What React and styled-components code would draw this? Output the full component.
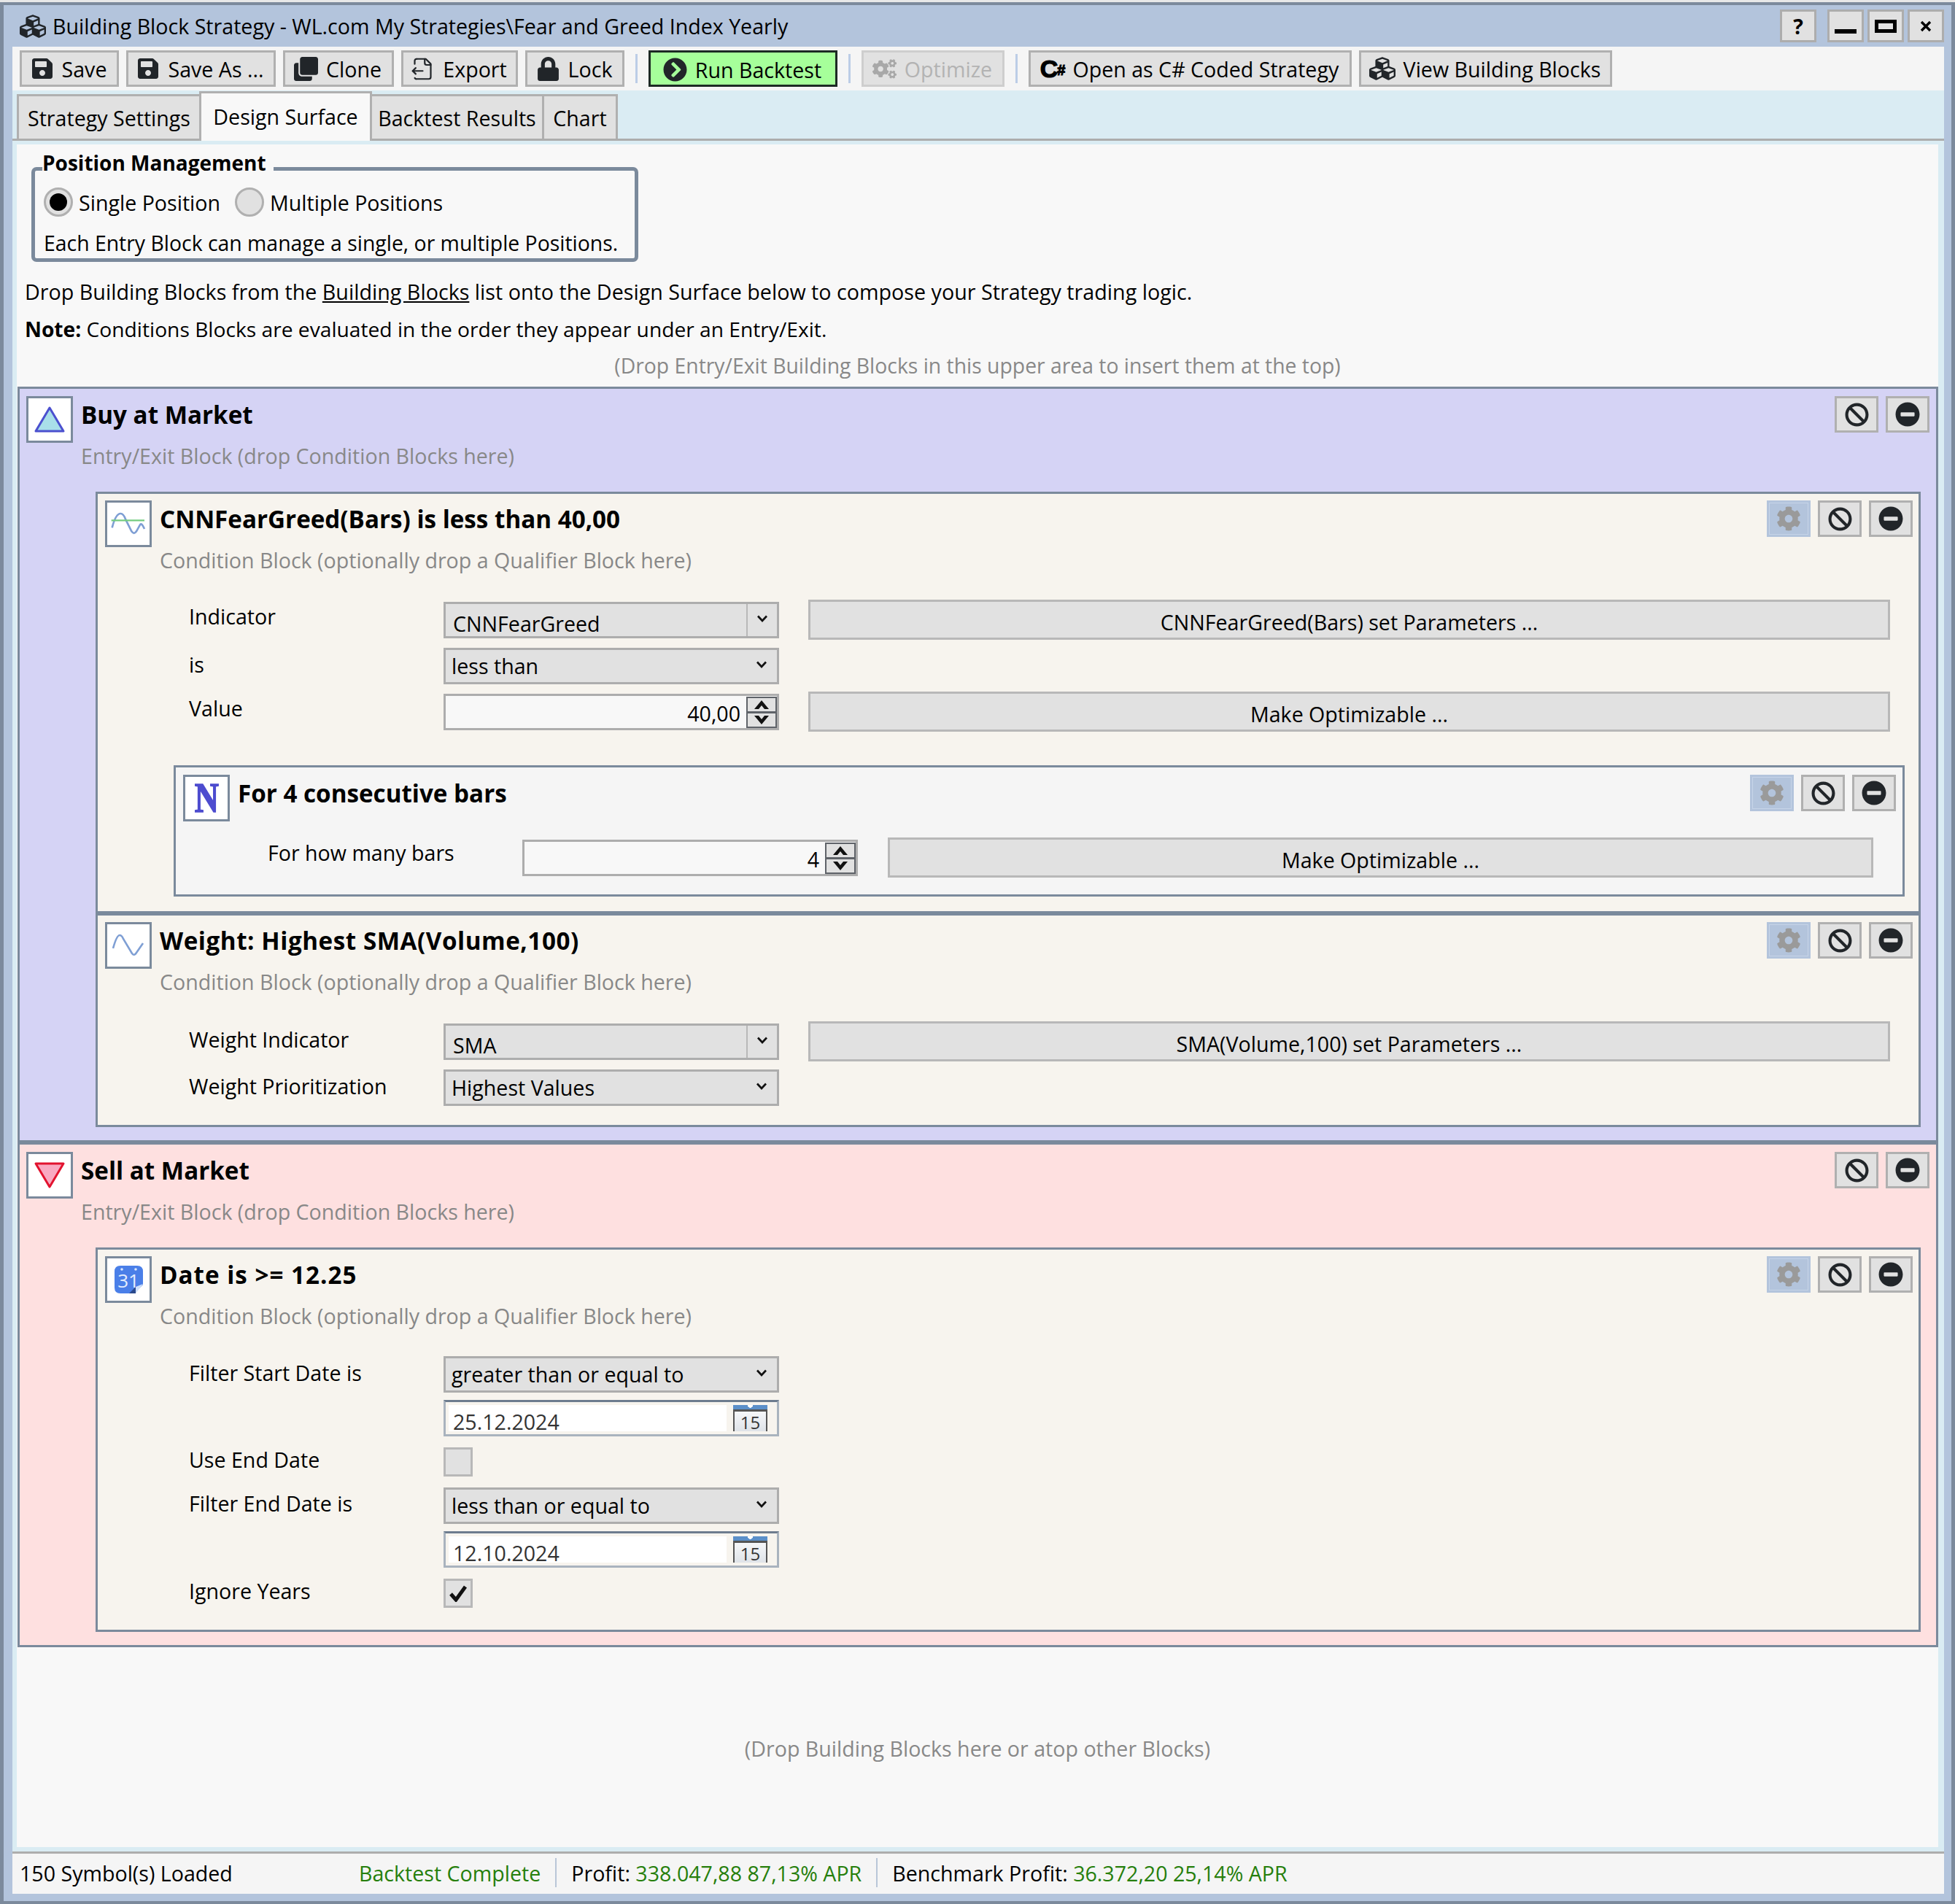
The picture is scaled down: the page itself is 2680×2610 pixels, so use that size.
import styled, { createGlobalStyle } from 'styled-components'
import {
  FaBan,
  FaChevronCircleRight,
  FaClone,
  FaCog,
  FaCogs,
  FaCubes,
  FaLock,
  FaMinusCircle,
  FaSave,
} from 'react-icons/fa'
import { LuFileOutput } from 'react-icons/lu'

const GlobalStyle = createGlobalStyle`
  html, body {
    margin: 0;
    padding: 0;
    background: #e8e8e8;
  }
  * {
    box-sizing: border-box;
  }
`

const TriangleIcon = ({ down }) => (
  <svg width="44" height="38" viewBox="0 0 44 38">
    {down ? (
      <path d="M3 3 H41 L22 35 Z" fill="#f9aac2" stroke="#e2132f" strokeWidth="3" strokeLinejoin="round" />
    ) : (
      <path d="M22 3 L41 35 H3 Z" fill="#a9dfe9" stroke="#4b50cf" strokeWidth="3" strokeLinejoin="round" />
    )}
  </svg>
)

const LevelWaveIcon = () => (
  <svg width="48" height="36" viewBox="40 60 144 108">
    <path
      d="M45 130 Q60 72 80 72 Q92 72 100 95 L125 145 Q135 160 145 145 L160 118 Q166 108 178 135"
      fill="none"
      stroke="#7f9fd4"
      strokeWidth="8"
    />
    <path d="M42 100 H178" stroke="#74cc80" strokeWidth="7" />
  </svg>
)

const WaveIcon = () => (
  <svg width="44" height="32" viewBox="0 0 44 32">
    <path d="M1 20 Q6 2 10 2 Q13 2 15 7 L27 27 Q30 31 33 26 L42 13" fill="none" stroke="#7f9fd4" strokeWidth="2.6" />
  </svg>
)

const CalendarBlockIcon = () => (
  <svg width="39" height="38" viewBox="0 0 39 38">
    <path d="M8 0 H31 Q39 0 39 8 V26 L27 38 H8 Q0 38 0 30 V8 Q0 0 8 0 Z" fill="#4a7fe8" />
    <path d="M20 38 L29 29 V38 Z" fill="#2b4a8c" />
    <path d="M29 29 L39 25 L29 38 Z" fill="#cfe0fb" />
    <circle cx="10" cy="5" r="1.8" fill="#dbe7fc" />
    <circle cx="29" cy="5" r="1.8" fill="#dbe7fc" />
    <text x="19" y="30" textAnchor="middle" fontFamily="Open Sans, sans-serif" fontSize="26" fill="#e4edfd">
      31
    </text>
  </svg>
)

const CalendarPicker = () => (
  <CalendarFace>
    <CalendarHead />
    <CalendarDay>15</CalendarDay>
  </CalendarFace>
)

const Chevron = () => (
  <svg width="16" height="10" viewBox="0 0 16 10">
    <path d="M2 1.5 L8 8 L14 1.5" fill="none" stroke="#111" strokeWidth="2.7" />
  </svg>
)

const Spinner = () => (
  <SpinBox>
    <SpinPart>
      <svg width="22" height="14" viewBox="0 0 22 14">
        <path d="M11 1 L21 13 H15 L11 8 L7 13 H1 Z" fill="#111" />
      </svg>
    </SpinPart>
    <SpinPart>
      <svg width="22" height="14" viewBox="0 0 22 14">
        <path d="M11 13 L21 1 H15 L11 6 L7 1 H1 Z" fill="#111" />
      </svg>
    </SpinPart>
  </SpinBox>
)

const BlockActions = ({ gear }) => (
  <Actions>
    {gear && (
      <ActionButton $gear>
        <FaCog size={34} />
      </ActionButton>
    )}
    <ActionButton>
      <FaBan size={33} />
    </ActionButton>
    <ActionButton>
      <FaMinusCircle size={34} />
    </ActionButton>
  </Actions>
)

const Select = ({ value, editable }) => (
  <SelectBox>
    <SelectText $editable={editable}>{value}</SelectText>
    <SelectArrow $editable={editable}>
      <Chevron />
    </SelectArrow>
  </SelectBox>
)

const NumberInput = ({ value }) => (
  <NumberBox>
    <NumberText>{value}</NumberText>
    <Spinner />
  </NumberBox>
)

const DateInput = ({ value }) => (
  <DateBox>
    <DateText>{value}</DateText>
    <CalendarPicker />
  </DateBox>
)

const toolbarLeft = [
  { label: 'Save', icon: <FaSave size={32} />, width: 136 },
  { label: 'Save As ...', icon: <FaSave size={32} />, width: 205 },
  { label: 'Clone', icon: <FaClone size={33} />, width: 152 },
  { label: 'Export', icon: <LuFileOutput size={33} strokeWidth={1.6} />, width: 160 },
  { label: 'Lock', icon: <FaLock size={33} />, width: 136 },
]

const App = () => {
  return (
    <Window>
      <GlobalStyle />
      <TitleBar>
        <TitleIcon>
          <FaCubes size={36} />
        </TitleIcon>
        <TitleText>Building Block Strategy - WL.com My Strategies\Fear and Greed Index Yearly</TitleText>
        <WindowButtons>
          <WindowButton $help>?</WindowButton>
          <WindowButton $low>
            <svg width="30" height="6" viewBox="0 0 30 6">
              <rect width="30" height="6" fill="#000" />
            </svg>
          </WindowButton>
          <WindowButton>
            <svg width="30" height="18" viewBox="0 0 30 18">
              <rect x="2.5" y="2.5" width="25" height="13" fill="none" stroke="#000" strokeWidth="5" />
            </svg>
          </WindowButton>
          <WindowButton>
            <svg width="16" height="16" viewBox="0 0 16 16">
              <path d="M2 2 L14 14 M14 2 L2 14" stroke="#000" strokeWidth="3.4" />
            </svg>
          </WindowButton>
        </WindowButtons>
      </TitleBar>

      <Toolbar>
        {toolbarLeft.map((item) => (
          <ToolButton key={item.label} $w={item.width}>
            {item.icon}
            <span>{item.label}</span>
          </ToolButton>
        ))}
        <ToolSeparator />
        <RunButton $w={259}>
          <FaChevronCircleRight size={33} />
          <span>Run Backtest</span>
        </RunButton>
        <ToolSeparator />
        <ToolButton $disabled $w={196}>
          <FaCogs size={33} />
          <span>Optimize</span>
        </ToolButton>
        <ToolSeparator />
        <ToolButton $w={443}>
          <CSharpMark>
            C<small>#</small>
          </CSharpMark>
          <span>Open as C# Coded Strategy</span>
        </ToolButton>
        <ToolButton $w={347}>
          <FaCubes size={36} />
          <span>View Building Blocks</span>
        </ToolButton>
      </Toolbar>

      <TabStrip>
        <Tab $w={253}>Strategy Settings</Tab>
        <Tab $active $w={237}>
          Design Surface
        </Tab>
        <Tab $w={239}>Backtest Results</Tab>
        <Tab $w={104}>Chart</Tab>
      </TabStrip>

      <TabPanel>
        <Surface>
          <PositionGroup>
            <legend>Position Management</legend>
            <RadioRow>
              <Radio $checked />
              <RadioLabel>Single Position</RadioLabel>
              <Radio />
              <RadioLabel>Multiple Positions</RadioLabel>
            </RadioRow>
            <GroupNote>Each Entry Block can manage a single, or multiple Positions.</GroupNote>
          </PositionGroup>

          <InfoLine>
            Drop Building Blocks from the <u>Building Blocks</u> list onto the Design Surface below to compose your
            Strategy trading logic.
          </InfoLine>
          <InfoLine $narrow>
            <b>Note:</b> Conditions Blocks are evaluated in the order they appear under an Entry/Exit.
          </InfoLine>
          <DropHint>(Drop Entry/Exit Building Blocks in this upper area to insert them at the top)</DropHint>

          <EntryBlock $bg="#d5d3f5">
            <BlockHead>
              <IconBox>
                <TriangleIcon />
              </IconBox>
              <HeadText>
                <BlockTitle>Buy at Market</BlockTitle>
                <BlockSub>Entry/Exit Block (drop Condition Blocks here)</BlockSub>
              </HeadText>
              <BlockActions />
            </BlockHead>

            <ConditionBlock>
              <ConditionHead>
                <IconBox>
                  <LevelWaveIcon />
                </IconBox>
                <HeadText>
                  <BlockTitle>CNNFearGreed(Bars) is less than 40,00</BlockTitle>
                  <BlockSub>Condition Block (optionally drop a Qualifier Block here)</BlockSub>
                </HeadText>
                <BlockActions gear />
              </ConditionHead>
              <FormRow>
                <FieldLabel $lift={11}>Indicator</FieldLabel>
                <Select value="CNNFearGreed" editable />
                <WideButton>CNNFearGreed(Bars) set Parameters ...</WideButton>
              </FormRow>
              <FormRow>
                <FieldLabel $lift={4}>is</FieldLabel>
                <Select value="less than" />
              </FormRow>
              <FormRow>
                <FieldLabel $lift={11}>Value</FieldLabel>
                <NumberInput value="40,00" />
                <WideButton>Make Optimizable ...</WideButton>
              </FormRow>

              <QualifierBlock>
                <QualifierHead>
                  <IconBox>
                    <QualifierLetter>N</QualifierLetter>
                  </IconBox>
                  <HeadText>
                    <BlockTitle>For 4 consecutive bars</BlockTitle>
                  </HeadText>
                  <BlockActions gear />
                </QualifierHead>
                <FormRow $inner>
                  <FieldLabel $lift={14}>For how many bars</FieldLabel>
                  <NumberInput value="4" />
                  <WideButton>Make Optimizable ...</WideButton>
                </FormRow>
              </QualifierBlock>
            </ConditionBlock>

            <ConditionBlock>
              <ConditionHead>
                <IconBox>
                  <WaveIcon />
                </IconBox>
                <HeadText>
                  <BlockTitle $track={0.55}>Weight: Highest SMA(Volume,100)</BlockTitle>
                  <BlockSub>Condition Block (optionally drop a Qualifier Block here)</BlockSub>
                </HeadText>
                <BlockActions gear />
              </ConditionHead>
              <FormRow>
                <FieldLabel>Weight Indicator</FieldLabel>
                <Select value="SMA" editable />
                <WideButton>SMA(Volume,100) set Parameters ...</WideButton>
              </FormRow>
              <FormRow>
                <FieldLabel $lift={4}>Weight Prioritization</FieldLabel>
                <Select value="Highest Values" />
              </FormRow>
            </ConditionBlock>
          </EntryBlock>

          <EntryBlock $bg="#fee0e0">
            <BlockHead>
              <IconBox>
                <TriangleIcon down />
              </IconBox>
              <HeadText>
                <BlockTitle>Sell at Market</BlockTitle>
                <BlockSub>Entry/Exit Block (drop Condition Blocks here)</BlockSub>
              </HeadText>
              <BlockActions />
            </BlockHead>

            <ConditionBlock>
              <ConditionHead>
                <IconBox>
                  <CalendarBlockIcon />
                </IconBox>
                <HeadText>
                  <BlockTitle $track={1}>Date is &gt;= 12.25</BlockTitle>
                  <BlockSub>Condition Block (optionally drop a Qualifier Block here)</BlockSub>
                </HeadText>
                <BlockActions gear />
              </ConditionHead>
              <FormRow $tight>
                <FieldLabel $lift={5}>Filter Start Date is</FieldLabel>
                <Select value="greater than or equal to" />
              </FormRow>
              <FormRow $tight>
                <FieldLabel />
                <DateInput value="25.12.2024" />
              </FormRow>
              <FormRow $tight>
                <FieldLabel>Use End Date</FieldLabel>
                <CheckBox />
              </FormRow>
              <FormRow $tight>
                <FieldLabel>Filter End Date is</FieldLabel>
                <Select value="less than or equal to" />
              </FormRow>
              <FormRow $tight>
                <FieldLabel />
                <DateInput value="12.10.2024" />
              </FormRow>
              <FormRow $tight>
                <FieldLabel>Ignore Years</FieldLabel>
                <CheckBox>
                  <svg width="26" height="24" viewBox="0 0 26 24">
                    <path d="M3 13 L10 21 L23 3" fill="none" stroke="#111" strokeWidth="5" />
                  </svg>
                </CheckBox>
              </FormRow>
            </ConditionBlock>
          </EntryBlock>

          <BottomDrop>(Drop Building Blocks here or atop other Blocks)</BottomDrop>
        </Surface>
      </TabPanel>

      <StatusBar>
        <StatusCell $w={465}>150 Symbol(s) Loaded</StatusCell>
        <StatusCell $green>Backtest Complete</StatusCell>
        <StatusSeparator />
        <StatusCell>
          Profit: <Green>338.047,88 87,13% APR</Green>
        </StatusCell>
        <StatusSeparator />
        <StatusCell>
          Benchmark Profit: <Green>36.372,20 25,14% APR</Green>
        </StatusCell>
      </StatusBar>
    </Window>
  )
}

const uiFont = `'Open Sans', 'Noto Sans', sans-serif`

const Window = styled.div`
  width: 2680px;
  height: 2607px;
  margin-top: 3px;
  padding: 0 10px 10px 12px;
  display: flex;
  flex-direction: column;
  background: #b3c4dc;
  border: 5px solid #7c8a9c;
  border-top-width: 4px;
  border-bottom-width: 4px;
  font-family: ${uiFont};
  font-size: 28.6px;
  color: #000;
`

const TitleBar = styled.div`
  height: 57px;
  flex: none;
  display: flex;
  align-items: center;
`

const TitleIcon = styled.div`
  display: flex;
  margin: 0 9px 0 10px;
  color: #212529;
`

const TitleText = styled.div`
  flex: 1;
  white-space: nowrap;
`

const WindowButtons = styled.div`
  display: flex;
  gap: 5px;
`

const WindowButton = styled.div`
  width: 50px;
  height: 45px;
  margin-right: ${(p) => (p.$help ? '10px' : '0')};
  padding-top: ${(p) => (p.$low ? '14px' : '0')};
  display: flex;
  align-items: center;
  justify-content: center;
  background: #e1e1e1;
  border: 3px solid #adadad;
  font-weight: 700;
`

const Toolbar = styled.div`
  height: 60px;
  flex: none;
  display: flex;
  align-items: center;
  gap: 10px;
  padding-left: 10px;
  background: #f5f5f5;
`

const ToolButton = styled.div`
  width: ${(p) => p.$w}px;
  height: 50px;
  flex: none;
  display: flex;
  align-items: center;
  justify-content: center;
  gap: 11px;
  padding-right: 2px;
  background: #e1e1e1;
  border: 3px solid ${(p) => (p.$disabled ? '#cecece' : '#b0b0b0')};
  color: ${(p) => (p.$disabled ? '#b3b3b3' : '#000')};
  white-space: nowrap;

  svg {
    color: ${(p) => (p.$disabled ? '#a8a8a8' : '#212529')};
    flex: none;
  }
`

const RunButton = styled(ToolButton)`
  padding-top: 2px;
  background: #a6ff9a;
  border-color: #1d2a24;
`

const CSharpMark = styled.b`
  font-family: 'Liberation Sans', sans-serif;
  font-size: 34px;
  font-weight: 700;
  letter-spacing: -1px;
  -webkit-text-stroke: 1.2px #000;

  small {
    font-size: 20px;
    vertical-align: 3px;
  }
`

const ToolSeparator = styled.div`
  width: 3px;
  height: 40px;
  margin: 0 5px;
  background: #bccde6;
`

const TabStrip = styled.div`
  height: 69px;
  flex: none;
  display: flex;
  align-items: flex-end;
  padding-left: 6px;
  background: #daecf3;
  border-bottom: 3px solid #adadad;
`

const Tab = styled.div`
  position: relative;
  z-index: ${(p) => (p.$active ? 1 : 0)};
  width: ${(p) => p.$w}px;
  height: ${(p) => (p.$active ? '68px' : '61px')};
  margin-bottom: ${(p) => (p.$active ? '-3px' : '0')};
  padding-bottom: ${(p) => (p.$active ? '3px' : '0')};
  display: flex;
  align-items: center;
  justify-content: center;
  background: ${(p) => (p.$active ? '#f8f8f8' : '#e1e1e1')};
  border: 3px solid #b0b0b0;
  border-bottom: none;
  white-space: nowrap;

  & + & {
    margin-left: -3px;
  }
`

const TabPanel = styled.div`
  flex: 1;
  min-height: 0;
  display: flex;
  padding: 5px 8px 6px 6px;
  background: #daecf3;
`

const Surface = styled.div`
  flex: 1;
  min-width: 0;
  display: flex;
  flex-direction: column;
  background: #f8f8f8;
`

const PositionGroup = styled.fieldset`
  width: 832px;
  height: 156px;
  margin: 5px 0 16px 20px;
  padding: 0 0 0 12px;
  border: 5px solid #7b8a9c;
  border-radius: 7px;

  legend {
    margin-left: -2px;
    padding: 0 10px 16px 0;
    font-size: 28px;
    line-height: 40px;
    font-weight: 700;
  }
`

const RadioRow = styled.div`
  height: 40px;
  margin-top: -2px;
  display: flex;
  align-items: center;
`

const Radio = styled.div`
  width: 40px;
  height: 40px;
  flex: none;
  border-radius: 50%;
  background: #e1e1e1;
  border: 3px solid #b0b0b0;
  display: flex;
  align-items: center;
  justify-content: center;

  &::after {
    content: '';
    display: ${(p) => (p.$checked ? 'block' : 'none')};
    width: 24px;
    height: 24px;
    border-radius: 50%;
    background: #000;
  }
`

const RadioLabel = styled.span`
  margin: 0 20px 0 8px;
  white-space: nowrap;
`

const GroupNote = styled.div`
  margin-top: 16px;
  font-size: 28.4px;
  line-height: 40px;
  white-space: nowrap;
`

const InfoLine = styled.div`
  height: 50.5px;
  margin-left: 11px;
  line-height: 50.5px;
  font-size: ${(p) => (p.$narrow ? '28.2px' : '28.7px')};
  white-space: nowrap;
`

const DropHint = styled.div`
  height: 50.5px;
  line-height: 50.5px;
  font-size: 28.35px;
  text-align: center;
  color: #888;
`

const EntryBlock = styled.div`
  margin: 3.5px 0 0 1px;
  padding: 10px 9px 18px;
  background: ${(p) => p.$bg};
  border: 3px solid #7b8a9c;

  & + & {
    margin-top: 0;
  }
`

const BlockHead = styled.div`
  height: 131px;
  display: flex;
  align-items: flex-start;
`

const ConditionHead = styled(BlockHead)`
  height: 132px;
`

const QualifierHead = styled(BlockHead)`
  height: 82px;
`

const IconBox = styled.div`
  width: 64px;
  height: 64px;
  flex: none;
  display: flex;
  align-items: center;
  justify-content: center;
  background: #fff;
  border: 3px solid #7b8a9c;
`

const HeadText = styled.div`
  flex: 1;
  min-width: 0;
  padding-left: 11px;
`

const BlockTitle = styled.div`
  height: 52px;
  line-height: 52px;
  font-size: 33.2px;
  font-weight: 700;
  letter-spacing: ${(p) => p.$track ?? 0}px;
  white-space: nowrap;
`

const BlockSub = styled.div`
  margin-top: 4px;
  line-height: 52px;
  color: #888;
  white-space: nowrap;
`

const Actions = styled.div`
  display: flex;
  gap: 10px;
`

const ActionButton = styled.div`
  width: 60px;
  height: 50px;
  display: flex;
  align-items: center;
  justify-content: center;
  background: ${(p) => (p.$gear ? '#b3c4dc' : '#e1e1e1')};
  border: 3px solid ${(p) => (p.$gear ? '#b3c4dc' : '#b0b0b0')};
  box-shadow: ${(p) => (p.$gear ? 'inset 0 0 0 1px #c6d4e8' : 'none')};
  color: ${(p) => (p.$gear ? '#9a9a9a' : '#212529')};
`

const ConditionBlock = styled.div`
  margin: 0 12px 0 95px;
  padding: 9px 8px 20px 10px;
  background: #f7f4ee;
  border: 3px solid #7b8a9c;
`

const QualifierBlock = styled.div`
  margin: 42px 11px 0 94px;
  padding: 10px 9px 19px 10px;
  background: #f5f5f5;
  border: 3px solid #7b8a9c;
`

const FormRow = styled.div`
  height: ${(p) => (p.$tight ? '60px' : '63px')};
  display: flex;
  align-items: center;
  padding-left: ${(p) => (p.$inner ? '116px' : '115px')};
`

const FieldLabel = styled.div`
  width: 349px;
  flex: none;
  padding-bottom: ${(p) => p.$lift ?? 7}px;
  white-space: nowrap;
`

const SelectBox = styled.div`
  width: 460px;
  height: 50px;
  flex: none;
  display: flex;
  align-items: stretch;
  background: #e1e1e1;
  border: 3px solid #adadad;
`

const SelectText = styled.div`
  flex: 1;
  padding: ${(p) => (p.$editable ? '9px 0 0 10px' : '0 0 0 8px')};
  line-height: ${(p) => (p.$editable ? '35px' : '44px')};
  white-space: nowrap;
`

const SelectArrow = styled.div`
  width: 42px;
  display: flex;
  align-items: center;
  justify-content: center;
  padding-bottom: 4px;
  border-left: ${(p) => (p.$editable ? '2px solid #b8b8b8' : 'none')};
`

const NumberBox = styled.div`
  width: 460px;
  height: 50px;
  flex: none;
  display: flex;
  align-items: stretch;
  padding: 1px 0 0;
  background: #f8f8f8;
  border: 3px solid #adadad;
`

const NumberText = styled.div`
  flex: 1;
  padding: 5px 8px 0 0;
  text-align: right;
  line-height: 36px;
`

const SpinBox = styled.div`
  width: 42px;
  display: flex;
  flex-direction: column;
  background: #5f6369;
  border: 2px solid #5f6369;
  gap: 3px;
`

const SpinPart = styled.div`
  flex: 1;
  display: flex;
  align-items: center;
  justify-content: center;
  background: #e1e1e1;
`

const WideButton = styled.div`
  width: 1483px;
  height: 55px;
  margin-left: 40px;
  flex: none;
  display: flex;
  align-items: center;
  justify-content: center;
  padding-top: 5px;
  background: #e1e1e1;
  border: 3px solid #b8b8b8;
  white-space: nowrap;

  ${QualifierBlock} & {
    width: 1351px;
    margin-left: 41px;
  }
`

const QualifierLetter = styled.span`
  font-family: 'Liberation Serif', serif;
  font-size: 56px;
  font-weight: 700;
  line-height: 1;
  color: #4d4ccf;
  -webkit-text-stroke: 1.5px #4d4ccf;
  transform: scaleX(0.82);
`

const DateBox = styled.div`
  width: 460px;
  height: 50px;
  flex: none;
  display: flex;
  align-items: center;
  gap: 9px;
  padding: 4px 13px 4px 4px;
  background: #f7f4ee;
  border: 3px solid #a9b3be;
  border-top-color: #6d7c8e;
`

const DateText = styled.div`
  flex: 1;
  height: 36px;
  padding-left: 6px;
  display: flex;
  align-items: flex-end;
  line-height: 26px;
  background: #fff;
  color: #333;
`

const CalendarFace = styled.div`
  width: 47px;
  height: 36px;
  flex: none;
  display: flex;
  flex-direction: column;
`

const CalendarHead = styled.div`
  height: 9px;
  flex: none;
  background: radial-gradient(circle at 50% 0, #fff 3.5px, #5b8fc9 4px);
  border-bottom: 3px solid #555;
`

const CalendarDay = styled.div`
  flex: 1;
  display: flex;
  align-items: center;
  justify-content: center;
  padding-top: 3px;
  background: linear-gradient(#f6f7f9, #dfe3e8);
  border-left: 2px solid #555;
  border-right: 2px solid #555;
  font-size: 24px;
  line-height: 24px;
  color: #333;
`

const CheckBox = styled.div`
  width: 40px;
  height: 40px;
  display: flex;
  align-items: center;
  justify-content: center;
  background: #e1e1e1;
  border: 3px solid #b8b8b8;
`

const BottomDrop = styled.div`
  flex: 1;
  padding-top: 2px;
  display: flex;
  align-items: center;
  justify-content: center;
  color: #888;
`

const StatusBar = styled.div`
  height: 58px;
  flex: none;
  display: flex;
  align-items: center;
  padding: 0 0 3px 10px;
  background: #f5f5f5;
  border-top: 3px solid #adadad;
`

const StatusCell = styled.div`
  width: ${(p) => (p.$w ? `${p.$w}px` : 'auto')};
  padding-right: 20px;
  white-space: pre;
  color: ${(p) => (p.$green ? '#267f0c' : '#000')};
`

const Green = styled.span`
  color: #267f0c;
`

const StatusSeparator = styled.div`
  width: 2px;
  height: 40px;
  margin-right: 20px;
  background: #b9c6d8;
`

export default App
